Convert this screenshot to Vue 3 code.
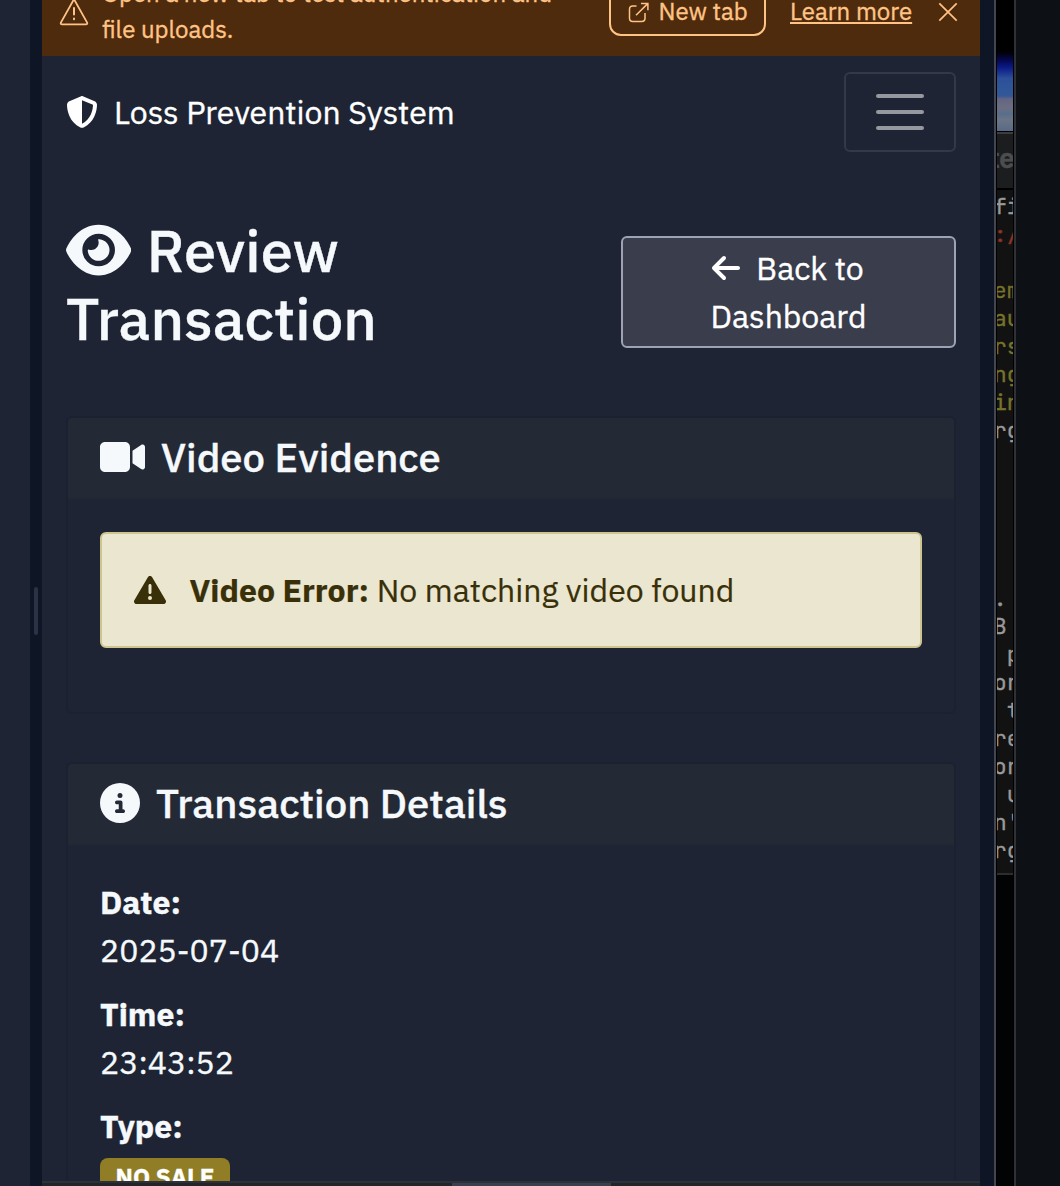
<script setup>
const details = [
  { label: 'Date:', value: '2025-07-04' },
  { label: 'Time:', value: '23:43:52' },
]

const terminalLines = [
  { text: 'fi', tone: 'plain' },
  { text: ':/', tone: 'red' },
  { text: '', tone: 'plain' },
  { text: 'em', tone: 'olive' },
  { text: 'au', tone: 'olive' },
  { text: 'rs', tone: 'olive' },
  { text: 'ng', tone: 'olive' },
  { text: 'in', tone: 'olive' },
  { text: 'rg', tone: 'plain' },
  { text: '', tone: 'plain' },
  { text: '', tone: 'plain' },
  { text: '', tone: 'plain' },
  { text: '', tone: 'plain' },
  { text: '', tone: 'plain' },
  { text: '. ', tone: 'plain' },
  { text: 'B ', tone: 'plain' },
  { text: ' p', tone: 'plain' },
  { text: 'or', tone: 'plain' },
  { text: ' t', tone: 'plain' },
  { text: 're', tone: 'plain' },
  { text: 'or', tone: 'plain' },
  { text: ' u', tone: 'plain' },
  { text: 'n\'', tone: 'plain' },
  { text: 'rg', tone: 'plain' },
]
</script>

<template>
  <div class="screen">
    <div class="side-pane"></div>
    <div class="divider"><span class="grip"></span></div>

    <main class="preview">
      <div class="page">
        <div class="banner">
          <svg class="banner-warn" viewBox="0 0 30 30" fill="none" stroke="currentColor" stroke-width="1.8" stroke-linejoin="round" stroke-linecap="round">
            <path d="M15 2.200 28 25.400q.9 2-1.200 2H3.200q-2.100 0-1.200-2Z" />
            <path d="M15 11v6.500M15 21.600v.6" stroke-width="2" />
          </svg>
          <p class="banner-text">Open a new tab to test authentication and<br>file uploads.</p>
          <button class="new-tab">
            <svg viewBox="0 0 24 24" fill="none" stroke="currentColor" stroke-width="1.5">
              <path d="M9.500 6H5.800q-3.300 0-3.300 3.200v9q0 3.200 3.300 3.200h8.900q3.300 0 3.300-3.200V13" />
              <path d="M9 15.300 20.700 3.600M14 3.400h6.900v6.900" />
            </svg>
            <span>New tab</span>
          </button>
          <a class="learn">Learn more</a>
          <svg class="close" viewBox="0 0 20 20" fill="none" stroke="currentColor" stroke-width="1.7"><path d="M1.300 1.300l17.400 17.400M18.700 1.300l-17.400 17.400" /></svg>
        </div>

        <nav class="navbar">
          <div class="brand">
            <svg viewBox="0 0 512 512" fill="currentColor"><path d="M256 0c4.600 0 9.200 1 13.400 2.900L457.700 82.800c22 9.300 38.400 31 38.300 57.200c-.5 99.200-41.300 280.700-213.600 363.200c-16.700 8-36.100 8-52.800 0C57.300 420.700 16.500 239.200 16 140c-.1-26.200 16.300-47.900 38.300-57.200L242.700 2.900C246.800 1 251.400 0 256 0zm0 66.800V444.800C394 378 431.100 230.100 432 141.400L256 66.800z" /></svg>
            <span>Loss Prevention System</span>
          </div>
          <button class="toggler"><i></i><i></i><i></i></button>
        </nav>

        <header class="heading">
          <h1>
            <svg viewBox="0 0 576 512" fill="currentColor"><path d="M288 32c-80.800 0-145.500 36.800-192.600 80.600C48.600 156 17.300 208 2.500 243.700c-3.300 7.900-3.300 16.700 0 24.600C17.300 304 48.600 356 95.400 399.400C142.500 443.200 207.200 480 288 480s145.500-36.800 192.600-80.600c46.800-43.500 78.100-95.400 93-131.100c3.300-7.900 3.300-16.700 0-24.600c-14.900-35.700-46.200-87.700-93-131.100C433.500 68.800 368.800 32 288 32zM144 256a144 144 0 1 1 288 0 144 144 0 1 1 -288 0zm144-64c0 35.300-28.700 64-64 64c-7.100 0-13.900-1.200-20.300-3.300c-5.500-1.800-11.900 1.600-11.700 7.400c.3 6.900 1.300 13.800 3.200 20.700c13.700 51.200 66.400 81.600 117.600 67.900s81.600-66.400 67.900-117.600c-11.100-41.500-47.800-69.400-88.600-71.100c-5.800-.2-9.200 6.100-7.400 11.700c2.100 6.400 3.300 13.200 3.300 20.300z" /></svg><span class="review">Review</span><br>Transaction
          </h1>
          <button class="back">
            <span class="back-line"><svg viewBox="0 0 448 512" fill="currentColor"><path d="M9.400 233.400c-12.500 12.500-12.500 32.800 0 45.300l160 160c12.500 12.500 32.800 12.500 45.300 0s12.500-32.800 0-45.300L109.200 288 416 288c17.700 0 32-14.300 32-32s-14.300-32-32-32l-306.700 0L214.600 118.600c12.500-12.500 12.500-32.800 0-45.300s-32.800-12.500-45.300 0l-160 160z" /></svg><span>Back to</span></span>
            <span>Dashboard</span>
          </button>
        </header>

        <section class="card video">
          <div class="card-header">
            <svg class="ic-video" viewBox="0 0 576 512" fill="currentColor"><path d="M0 128C0 92.700 28.700 64 64 64H320c35.300 0 64 28.700 64 64V384c0 35.300-28.700 64-64 64H64c-35.300 0-64-28.700-64-64V128zM559.100 99.800c10.400 5.600 16.900 16.400 16.900 28.200V384c0 11.800-6.500 22.600-16.900 28.200s-23 5-32.900-1.600l-96-64L416 337.100V320 192 174.900l14.200-9.500 96-64c9.800-6.500 22.400-7.200 32.900-1.600z" /></svg>
            <h5>Video Evidence</h5>
          </div>
          <div class="card-body">
            <div class="alert">
              <svg viewBox="0 0 512 512" fill="currentColor"><path d="M256 32c14.200 0 27.300 7.500 34.500 19.800l216 368c7.300 12.400 7.300 27.700 .2 40.100S486.300 480 472 480H40c-14.300 0-27.600-7.700-34.700-20.100s-7-27.800 .2-40.100l216-368C228.700 39.500 241.800 32 256 32zm0 128c-13.300 0-24 10.700-24 24V296c0 13.300 10.700 24 24 24s24-10.700 24-24V184c0-13.300-10.700-24-24-24zm32 224a32 32 0 1 0 -64 0 32 32 0 1 0 64 0z" /></svg>
              <p><strong>Video Error:</strong> No matching video found</p>
            </div>
          </div>
        </section>

        <section class="card">
          <div class="card-header">
            <svg class="ic-info" viewBox="0 0 512 512" fill="currentColor"><path d="M256 512A256 256 0 1 0 256 0a256 256 0 1 0 0 512zM216 336h24V272H216c-13.300 0-24-10.700-24-24s10.700-24 24-24h48c13.300 0 24 10.700 24 24v88h8c13.300 0 24 10.700 24 24s-10.700 24-24 24H216c-13.300 0-24-10.700-24-24s10.700-24 24-24zm40-208a32 32 0 1 1 0 64 32 32 0 1 1 0-64z" /></svg>
            <h5>Transaction Details</h5>
          </div>
          <div class="card-body">
            <div v-for="d in details" :key="d.label" class="detail">
              <strong>{{ d.label }}</strong>
              <span>{{ d.value }}</span>
            </div>
            <div class="detail">
              <strong>Type:</strong>
              <div class="badge">NO SALE</div>
            </div>
          </div>
        </section>
      </div>
      <div class="scrollbar"><span></span></div>
    </main>

    <div class="gutter"></div>

    <aside class="terminal">
      <div class="sky"></div>
      <div class="term-title"><span>te</span></div>
      <div class="term-body">
        <div v-for="(l, i) in terminalLines" :key="i" :class="['line', l.tone]">{{ l.text }}</div>
      </div>
      <div class="term-rest"></div>
    </aside>
    <div class="desktop"></div>
  </div>
</template>

<style>
body { margin: 0; background: #1e2433; }
</style>

<style scoped>
* { box-sizing: border-box; }
.screen {
  display: flex;
  width: 1060px;
  height: 1186px;
  overflow: hidden;
  font-family: "IBM Plex Sans", Roboto, "Noto Sans", sans-serif;
  font-size: 32px;
  line-height: 48px;
  color: #f5f9fc;
  background: #1e2433;
  white-space: nowrap;
  -webkit-text-stroke: 0.35px currentColor;
}
svg { display: block; flex: none; }
p { margin: 0; }
button { font: inherit; color: inherit; padding: 0; margin: 0; background: none; }
.side-pane { flex: none; width: 30px; background: #1e2433; }
.divider { flex: none; width: 12px; background: #0e1525; padding: 587px 0 0 4px; }
.grip { display: block; width: 4px; height: 48px; border-radius: 2px; background: #2b3245; }
.preview { flex: none; width: 938px; display: flex; flex-direction: column; }
.page { height: 1181px; overflow: hidden; background: #1e2433; }

.banner {
  display: flex;
  align-items: flex-start;
  height: 56px;
  overflow: hidden;
  background: #4e2b0c;
  color: #ffc386;
  font-size: 24px;
  line-height: 36px;
}
.banner-warn { width: 30px; height: 30px; margin: -3px 0 0 17px; }
.banner-text { margin: -25px 0 0; padding-left: 13px; width: 520px; }
.new-tab {
  flex: none;
  display: flex;
  align-items: flex-start;
  width: 157px;
  height: 52px;
  margin-top: -16px;
  padding: 8px 0 0 16px;
  border: 2px solid #ffc386;
  border-radius: 12px;
}
.new-tab svg { width: 24px; height: 24px; margin-top: 6px; }
.new-tab span { margin-left: 7.500px; line-height: 34px; }
.learn {
  margin: -6px 0 0 24px;
  line-height: 35px;
  text-decoration: underline;
  text-decoration-thickness: 2px;
  text-underline-offset: 2px;
  text-decoration-skip-ink: none;
}
.close { width: 20px; height: 20px; margin: 2px 0 0 26px; }

.navbar { display: flex; justify-content: space-between; align-items: center; height: 112px; padding: 0 24px; color: #fff; }
.brand { display: flex; align-items: center; }
.brand svg { width: 32px; height: 32px; }
.brand span { margin-left: 16px; margin-top: -1px; }
.toggler {
  display: flex;
  flex-direction: column;
  align-items: center;
  justify-content: center;
  gap: 12px;
  width: 112px;
  height: 80px;
  border: 2px solid #343948;
  border-radius: 6px;
}
.toggler i { width: 48px; height: 4px; border-radius: 2px; background: #9698a0; }

.heading { display: flex; justify-content: space-between; align-items: flex-start; height: 248px; padding: 49px 24px 0; }
h1 { margin: 0; font-size: 58px; font-weight: 500; line-height: 68px; }
h1 svg { display: inline-block; width: 65.300px; height: 58px; vertical-align: -7px; }
.review { margin-left: 15.500px; }
.back {
  width: 335px;
  height: 112px;
  margin-top: 19px;
  padding-top: 6px;
  display: flex;
  flex-direction: column;
  align-items: center;
  border: 2px solid #9ea2b5;
  border-radius: 6px;
  background: #393d4c;
  color: #fff;
}
.back-line { display: flex; height: 48px; }
.back-line svg { width: 28px; height: 32px; margin: 8px 0 0 -1px; }
.back-line span { margin-left: 16px; }

.card { margin: 0 24px; border: 2px solid #1b2130; border-radius: 6px; }
.video { height: 298px; margin-bottom: 48px; }
.card-header { display: flex; align-items: flex-start; height: 82px; padding: 15px 32px 0; border-bottom: 2px solid #212635; border-radius: 4px 4px 0 0; background: #242936; }
h5 { margin: 0 0 0 16px; font-size: 40px; font-weight: 500; line-height: 48px; }
.ic-video { width: 45px; height: 40px; margin-top: 4px; }
.ic-info { width: 40px; height: 40px; margin-top: 4px; }
.card-body { padding: 32px; }
.alert { display: flex; align-items: flex-start; height: 116px; padding: 32px; border: 2px solid #cec58e; border-radius: 6px; background: #ebe6cf; color: #393009; -webkit-text-stroke: 0.2px currentColor; }
.alert svg { width: 32px; height: 32px; margin-top: 8px; }
.alert p { margin-left: 23.500px; }
strong { font-weight: 700; }
.detail { display: flex; flex-direction: column; align-items: flex-start; margin-bottom: 16px; }
.badge { width: 130px; height: 42px; margin-top: 8px; padding-left: 15.500px; border-radius: 8px; background: #907d26; color: #fff; font-size: 24px; font-weight: 700; line-height: 39px; }
.scrollbar { height: 5px; padding-left: 410px; border-top: 2px solid #2b303b; background: #23232a; }
.scrollbar span { display: block; width: 159px; height: 3px; background: #3a3f4d; }
.gutter { flex: none; width: 14px; background: #0e1525; }

.terminal {
  flex: none;
  width: 22px;
  display: flex;
  flex-direction: column;
  overflow: hidden;
  border-left: 2px solid #43454f;
  border-right: 2px solid #303136;
  padding: 0 1px;
  background: #000;
}
.sky { flex: none; height: 131px; background: linear-gradient(#000 0 50px, #01010c 53px, #050a56 61px, #0b1c88 68px, #2c4f99 78px, #2f5798 90px, #34579a 96px, #646681 99px, #6b6e83 108px, #596e8b 114px, #6b7586 120px, #596987 131px); }
.term-title { flex: none; height: 58px; margin-top: 1px; overflow: hidden; border-top: 2px solid #3c3d3f; border-bottom: 2px solid #000; background: #1b1d1f; color: #4c4d4f; font: bold 26px/49px Inter, sans-serif; }
.term-title span { display: block; margin-left: -7px; }
.term-body { flex: none; height: 685px; padding-top: 3px; overflow: hidden; border-bottom: 2px solid #2d2d2e; background: #121212; }
.line { height: 28px; margin-left: -3.500px; font: 22px/28px "JetBrains Mono", "DejaVu Sans Mono", monospace; white-space: pre; }
.plain { color: #999; }
.red { color: #8f3424; }
.olive { color: #77732b; }
.term-rest { flex: 1; background: #020304; }
.desktop { flex: 1; background: #0d1014; }
</style>
